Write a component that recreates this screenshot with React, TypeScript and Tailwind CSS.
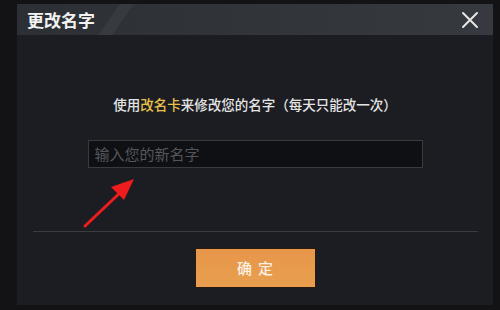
import React from "react";

export default function App() {
  return (
    <div
      className="relative w-[500px] h-[310px] overflow-hidden bg-[#131316] pt-[4px] pl-[17px] pr-[7px] pb-[5px]"
      style={{ fontFamily: '"Noto Sans CJK SC", "Noto Sans", sans-serif' }}
    >
      <div className="flex flex-col w-[476px] h-[301px] bg-[#1c1d22]">
        {/* header */}
        <div className="relative flex items-center justify-between h-[31px] bg-gradient-to-r from-[#2c2f34] to-[#363a40] pl-[10px] pr-[14px] overflow-hidden">
          <div className="absolute left-[92px] top-0 h-full w-[14px] bg-[#373b41] -skew-x-[35deg]" />
          <span className="relative text-[17px] font-bold text-[#f2f2f2] leading-none">
            更改名字
          </span>
          <svg width="18" height="18" viewBox="0 0 18 18" className="relative">
            <path d="M2 2 L16 16 M16 2 L2 16" stroke="#e6e6e6" strokeWidth="2" strokeLinecap="round" />
          </svg>
        </div>
        {/* body */}
        <div className="flex flex-col items-center flex-1 pt-[60px]">
          <p className="text-[13.5px] leading-[18px] text-[#e4e4e4] font-medium">
            使用<span className="text-[#e9c14a]">改名卡</span>来修改您的名字（每天只能改一次）
          </p>
          <div className="mt-[27px] w-[335px] h-[28px] bg-[#0f1013] border border-[#3a3b40] flex items-center px-[6px]">
            <span className="text-[15px] text-[#55565b]">输入您的新名字</span>
          </div>
          <div className="mt-[63px] w-[445px] h-px bg-[#3a3c42]" />
          <div className="mt-[16px] w-[121px] h-[40px] border border-[#2a1a0c] bg-gradient-to-b from-[#e7964a] to-[#e99f4f] flex items-center justify-center">
            <span className="text-[15px] text-[#fbf0e2] font-medium tracking-[6px] pl-[6px]">确定</span>
          </div>
        </div>
      </div>
      {/* red arrow annotation */}
      <svg className="absolute left-0 top-0" width="500" height="310" viewBox="0 0 500 310">
        <line x1="85" y1="226" x2="124" y2="189" stroke="#ee1c1c" strokeWidth="3" strokeLinecap="round" />
        <polygon points="134,179 111,187 124,200" fill="#ee1c1c" />
      </svg>
    </div>
  );
}
